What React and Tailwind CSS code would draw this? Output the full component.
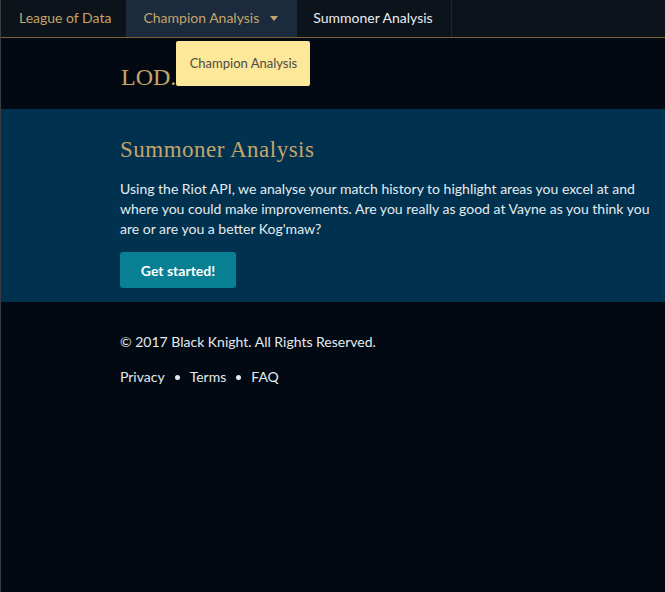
import React from 'react';

const NavBar = () => (
  <nav className="relative flex h-[38px] items-stretch border-b border-[#7c6237] bg-[#0c131b] pb-[2px] text-[14px]">
    <a className="flex items-center pl-[18px] pr-[15px] text-[#c4a56a]">League of Data</a>
    <div className="relative -mb-[2px] flex items-center bg-[#1b2a3c] pb-[2px] pl-[17px] pr-[19px] text-[#c4a56a]">
      <span>Champion Analysis</span>
      <span className="ml-[11px] mt-[1px] h-0 w-0 border-x-[4px] border-t-[5px] border-x-transparent border-t-[#c4a56a]" />
      <div className="absolute left-[50px] top-[41px] z-10 flex h-[45px] w-[134px] items-center justify-center rounded-[2px] bg-[#fde799] text-[13px] text-[#4d4b45]">
        Champion Analysis
      </div>
    </div>
    <a className="-mb-[2px] flex items-center border-r border-[#1e262f] pb-[2px] pl-[16px] pr-[18px] text-[#e6ecf0]">Summoner Analysis</a>
  </nav>
);

export default function App() {
  return (
    <div className="min-h-[592px] border-l border-[#3a3d40] bg-[#020912]" style={{ fontFamily: 'Lato, "Open Sans", sans-serif' }}>
      <NavBar />
      <div className="flex h-[71px] items-start pl-[120px] pt-[25px]">
        <span className="text-[24px] leading-[28px] text-[#c4a56a]" style={{ fontFamily: '"Liberation Serif", serif' }}>LOD.</span>
      </div>
      <section className="bg-[#003250] pl-[119px] pr-[6px] pt-[27px] pb-[14px]">
        <h1 className="text-[23px] leading-[28px] tracking-[0.5px] text-[#c4a56a]" style={{ fontFamily: '"Liberation Serif", serif' }}>Summoner Analysis</h1>
        <p className="mt-[15px] text-[14px] leading-[20px] text-[#e4ebef]">
          Using the Riot API, we analyse your match history to highlight areas you excel at and where you could make improvements. Are you really as good at Vayne as you think you are or are you a better Kog'maw?
        </p>
        <button className="mt-[13px] h-[36px] w-[116px] rounded-[3px] bg-[#087f92] text-[14px] font-bold text-white">Get started!</button>
      </section>
      <footer className="pl-[119px] pt-[30px] text-[14px] text-[#e4ebef]">
        <p className="leading-[20px]">© 2017 Black Knight. All Rights Reserved.</p>
        <div className="mt-[15px] flex items-center leading-[20px]">
          <a>Privacy</a>
          <span className="mx-[10px] h-[5px] w-[5px] rounded-full bg-[#e4ebef]" />
          <a>Terms</a>
          <span className="mx-[10px] h-[5px] w-[5px] rounded-full bg-[#e4ebef]" />
          <a>FAQ</a>
        </div>
      </footer>
    </div>
  );
}
